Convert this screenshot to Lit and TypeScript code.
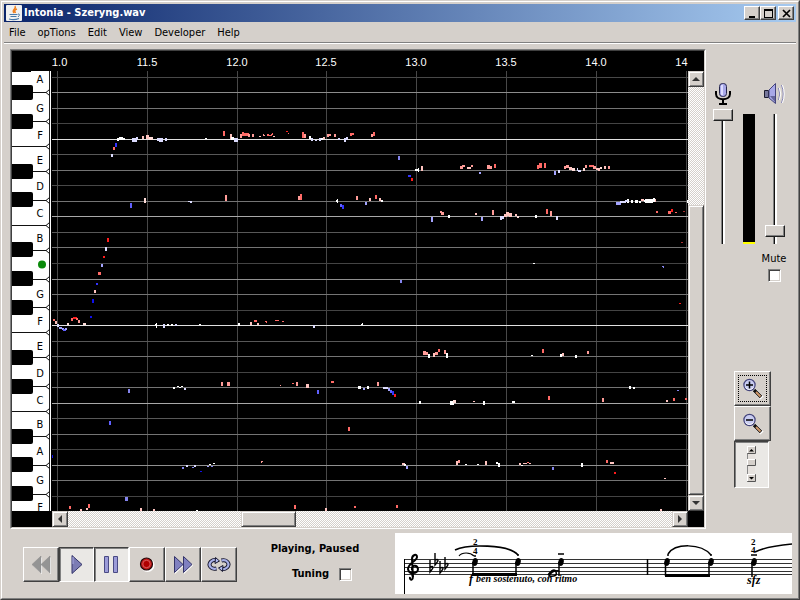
import { LitElement, html, svg, css } from "lit";
import { customElement, state } from "lit/decorators.js";

const TONES: Record<string, string> = {
  W: "#ffffff", P: "#ffc4c0", p: "#ffdcd8", S: "#ff9c98", R: "#ff6a66", X: "#ff1c1c",
  L: "#dcdcff", l: "#a4a4ff", m: "#8484ee", M: "#6060ff", B: "#3434ff", D: "#1010ee", K: "#a83030",
};

/* Detected pitches: x, y, width, height, tone. */
const NOTES = `
117 138 2 3 W;119 137 4 3 W;123 138 2 2 W;132 138 5 4 L;136 137 2 3 L;142 136 2 3 P;146 135 3 4 P;149 137 4 3 p;
157 138 2 3 L;159 138 4 4 L;165 138 2 3 L;113 147 2 3 R;115 143 2 4 B;111 154 2 3 L;144 198 2 5 p;130 203 2 5 M;
188 201 4 1 L;190 202 2 1 L;107 238 2 4 X;105 247 2 4 L;103 256 2 2 X;101 264 2 3 l;98 272 3 3 R;96 283 2 2 B;
94 290 2 3 P;92 299 2 4 D;90 316 2 2 D;53 319 2 2 R;55 321 2 3 P;57 324 2 3 L;59 327 3 2 l;62 328 2 2 l;63 329 3 2 M;
65 328 2 2 l;67 323 2 2 p;71 318 2 3 R;73 317 4 2 X;76 318 2 2 R;78 320 2 3 S;83 323 3 2 p;155 324 2 2 W;156 323 1 5 W;
163 324 2 4 L;167 324 2 2 W;171 324 2 2 W;175 324 2 2 L;199 324 2 1 W;128 389 2 4 m;173 387 2 2 W;177 386 2 1 W;
179 387 2 1 W;181 386 2 1 W;184 388 2 2 L;109 421 2 4 M;52 455 1 3 D;182 467 2 2 m;186 465 2 2 L;192 467 2 1 m;
194 465 2 2 L;125 497 3 4 m;69 506 2 3 R;80 509 2 2 P;86 508 2 2 P;88 504 2 4 R;140 508 2 3 P;153 509 2 2 P;
190 201 2 2 L;205 138 2 1 W;223 131 2 5 R;230 134 2 5 P;231 137 3 3 W;234 138 4 4 L;240 134 2 4 S;242 132 2 4 R;
244 133 5 3 R;248 134 2 3 S;252 134 2 3 S;259 136 2 1 P;263 134 1 2 S;264 135 1 1 S;267 134 2 2 R;269 135 3 1 R;
271 134 2 1 R;272 133 1 2 R;273 136 2 1 P;286 131 2 1 X;288 133 1 1 R;302 132 2 6 R;304 134 2 4 S;309 136 2 3 W;
311 138 2 3 L;315 140 2 1 L;319 138 2 3 L;321 138 2 2 W;323 137 2 2 P;327 134 2 3 S;329 134 2 2 S;334 134 2 3 S;
338 138 2 2 L;344 138 2 4 L;346 137 2 3 L;350 133 2 3 R;352 133 2 2 R;371 134 2 3 S;373 132 2 4 R;398 156 2 4 m;
408 175 3 2 B;411 178 2 3 X;415 169 3 2 W;418 168 1 4 W;421 166 2 5 P;225 195 2 6 S;298 196 2 4 S;300 194 2 6 R;
336 200 1 2 W;337 199 1 4 W;340 204 2 3 M;342 205 2 4 B;356 196 2 4 S;365 202 2 3 l;369 198 2 3 P;375 195 2 4 R;
379 198 2 3 P;381 200 2 2 W;400 280 2 3 m;460 166 3 3 S;462 165 3 2 S;467 167 4 2 P;471 165 2 2 S;479 172 2 2 l;
487 165 3 4 S;490 166 2 3 S;494 164 2 4 R;537 165 2 4 R;539 163 3 5 R;544 163 2 5 R;554 171 2 4 l;558 170 2 3 L;
564 166 2 3 S;566 165 3 3 S;569 167 3 3 P;572 168 3 3 p;577 168 1 3 L;578 170 3 2 L;583 168 2 3 p;585 165 2 3 S;
589 165 5 2 R;593 166 3 3 S;596 168 2 2 P;598 168 2 3 P;600 167 2 2 p;604 166 2 3 P;608 166 2 3 S;616 202 5 3 l;
620 201 4 2 L;624 201 2 2 L;627 199 2 4 W;625 200 3 2 L;631 200 2 3 W;635 200 3 3 W;639 201 2 2 W;641 199 3 2 P;
644 200 3 2 W;645 199 8 4 W;653 198 2 4 W;655 199 1 3 P;656 211 2 2 R;668 211 3 3 R;671 209 2 3 X;675 212 2 1 R;
683 211 2 1 K;687 200 1 3 W;440 211 2 2 S;441 212 3 3 S;448 215 2 3 W;431 217 2 5 l;475 213 2 2 P;481 217 2 4 l;
492 210 2 5 S;500 216 2 4 L;502 216 2 3 L;504 214 3 3 P;506 212 3 4 P;509 213 3 4 P;515 214 2 2 P;517 216 2 2 p;
535 215 2 3 W;546 209 2 5 R;550 211 2 5 S;556 216 2 4 L;681 242 2 1 K;662 266 2 1 m;663 267 1 1 m;533 263 2 1 W;
679 303 2 1 X;238 323 2 3 W;250 322 2 3 P;254 320 3 2 R;257 323 2 2 P;265 321 2 1 R;266 322 1 1 R;275 320 4 1 R;
282 321 2 1 R;313 325 2 3 L;361 324 2 1 W;362 323 1 2 W;423 351 3 4 S;426 352 2 3 S;428 354 2 4 W;433 353 2 4 P;
435 352 3 3 S;438 349 2 3 R;444 350 2 4 S;446 353 2 5 W;531 355 2 1 W;542 349 2 4 R;560 354 2 3 W;562 353 2 3 P;
575 355 2 3 W;587 351 2 3 S;221 382 2 4 S;227 382 3 4 S;280 385 1 1 S;292 383 2 1 R;296 382 2 4 S;306 384 3 4 P;
317 390 2 4 M;331 381 3 2 R;358 386 3 3 W;363 388 2 2 l;367 386 2 3 W;377 382 2 4 S;383 387 5 2 L;388 388 2 3 l;
390 390 2 3 M;392 391 2 4 B;394 394 2 3 X;419 401 2 3 W;450 401 4 4 W;453 400 3 3 p;473 401 2 1 P;483 401 2 4 W;
512 401 3 2 W;548 396 2 4 R;602 398 2 4 S;629 386 2 3 W;633 387 2 2 W;677 390 2 1 m;666 400 2 2 P;673 398 2 3 R;
685 398 2 2 R;348 427 2 4 R;200 471 2 1 D;207 466 2 1 l;209 464 2 1 W;211 466 2 1 m;213 463 2 1 W;261 461 2 1 S;
261 462 1 1 S;402 463 3 2 P;404 464 2 2 W;406 466 2 3 l;456 461 2 4 P;458 460 2 3 S;465 464 2 1 W;477 464 2 1 W;
485 461 2 4 P;496 462 2 2 W;498 463 2 4 W;519 463 2 2 P;521 465 2 1 W;523 463 4 1 P;527 462 2 1 R;529 463 2 1 P;
552 467 2 3 m;581 463 2 4 W;606 460 2 3 R;610 462 2 2 P;612 462 2 2 P;614 472 2 2 X;664 478 2 1 P;196 510 2 1 W;
294 505 2 4 R;325 508 2 3 P;354 506 2 2 R;396 505 2 3 R;660 509 2 2 P`
  .trim().split(";").map((n) => n.trim().split(" "));

/* Semitone lines, from the top; brightness repeats every octave. */
const LINE_TONES = ["#484848", "#8c8c8c", "#747474", "#444444", "#e0e0e0", "#585858", "#747474", "#484848", "#747474", "#a8a8a8", "#585858", "#747474", "#444444", "#909090", "#747474", "#444444", "#e0e0e0", "#585858", "#747474", "#444444", "#747474", "#a8a8a8", "#585858", "#747474", "#444444", "#909090", "#747474", "#444444"];
const LINES = LINE_TONES.map((tone, i) => ({ tone, y: 6 + Math.floor(i * 15.52 + 0.25) }));

const TICKS = [5, 95, 185, 274, 364, 454, 544, 634].map((x, i) => ({ x, label: (11 + i / 2).toFixed(1) }));

const WHITE_EDGES = [21, 50, 75, 100, 129, 154, 179, 208, 236, 261, 286, 315, 340, 365, 394, 423];
const BLACK_KEYS = [14, 43, 93, 121, 171, 200, 229, 279, 308, 358, 386, 415];
const KEY_NAMES: [string, number][] = [["A", 12], ["G", 41], ["F", 68], ["E", 93], ["D", 119], ["C", 146], ["B", 171], ["G", 227], ["F", 254], ["E", 279], ["D", 306], ["C", 333], ["B", 357], ["A", 384], ["G", 413], ["F", 440]];

const rect = (x: number, y: number, w: number | string, h: number | string, fill: string) =>
  svg`<rect x=${x} y=${y} width=${w} height=${h} fill=${fill} />`;

const magnifier = (plus: boolean) => html`
  <svg width="22" height="22" viewBox="0 0 22 22">
    <path d="M12 12 L20 20" stroke="#fff" stroke-width="4.500" />
    <path d="M12 12 L19 19" stroke="#111" stroke-width="3.600" />
    <path d="M14 14 L18.500 18.500" stroke="#d29a6c" stroke-width="2" />
    <circle cx="7.500" cy="7" r="5.600" fill="#c9cdf2" stroke="#44447c" stroke-width="1.200" />
    <path d="M3.500 9.500 a5 5 0 0 0 8 0" fill="none" stroke="#fff" />
    <path d=${plus ? "M4 7 h7 M7.500 3.500 v7" : "M4 7 h7"} stroke="#000" stroke-width="1.500" />
  </svg>`;

const ICONS = {
  rewind: html`<svg width="24" height="24"><path d="M13 4 V21 L4 12.500z M22 4 V21 L13 12.500z" fill="#fff" /><path d="M12 3 V20 L3 11.500z M21 3 V20 L12 11.500z" fill="#949494" stroke="#8a8a8a" stroke-width="0.500" /></svg>`,
  play: html`<svg width="24" height="24"><path d="M7 2.500 V20.500 L17 11.500z" fill="#7c7cb4" stroke="#333368" stroke-width="1" /><path d="M8 4 V11" stroke="#a8a8e0" stroke-width="1" /></svg>`,
  pause: html`<svg width="24" height="24"><path d="M4.500 3.500 h4 v16 h-4z M13.500 3.500 h4 v16 h-4z" fill="#9c9cd8" stroke="#4a4a84" /></svg>`,
  record: html`<svg width="24" height="24"><circle cx="12.500" cy="12" r="7" fill="#fff" /><circle cx="11.500" cy="11" r="6" fill="#c01818" stroke="#240808" stroke-width="1.200" /><circle cx="11.500" cy="11" r="3.700" fill="#b00000" stroke="#e07070" stroke-width="0.800" /></svg>`,
  forward: html`<svg width="24" height="24"><path d="M4 4 V21 L13 12.500z M13 4 V21 L22 12.500z" fill="#fff" /><path d="M3.500 3.500 V19.500 L12 11.500z M12.500 3.500 V19.500 L21 11.500z" fill="#8080c0" stroke="#333368" /></svg>`,
  loop: html`<svg width="24" height="24"><g fill="none"><path d="M9.500 15.500 C4 17 0.500 12 4 8.500 C6 6.800 8 6.800 9 7.300 M14.500 7.500 C20 6 23.500 11 20 14.500 C18 16.200 16 16.200 15 15.700" stroke="#15152c" stroke-width="4" /><path d="M9.500 15.500 C4 17 0.500 12 4 8.500 C6 6.800 8 6.800 9 7.300 M14.500 7.500 C20 6 23.500 11 20 14.500 C18 16.200 16 16.200 15 15.700" stroke="#a8b0e8" stroke-width="2.200" /></g><path d="M8.500 4.500 L12.500 8 L8 10.500z M15.500 18.500 L11.500 15 L16 12.500z" fill="#b4bcf0" stroke="#15152c" /></svg>`,
  mic: html`<svg width="18" height="24"><rect x="5.500" y="1.500" width="7" height="13" rx="3" fill="#a8a8e8" stroke="#26264c" /><path d="M8 3 v10" stroke="#dcdcff" stroke-width="2" /><path d="M2 9 V12 C2 19 16 19 16 12 V9" fill="none" stroke="#000" stroke-width="2" /><path d="M9 17 V21 M5 22 H13" stroke="#000" stroke-width="2" /></svg>`,
  speaker: html`<svg width="24" height="24"><path d="M1.500 8.500 h4 v7 h-4z" fill="#78789c" stroke="#1c1c30" /><path d="M6 8 L12.500 1.500 V21.500 L6 16z" fill="#a8a8e8" stroke="#44447c" /><path d="M7 14 L12 14 V20z" fill="#66669c" /><path d="M15.500 6 Q18 12 15.500 18 M18.500 3 Q22 12 18.500 21" fill="none" stroke="#8484b8" /><path d="M16.500 6 Q19 12 16.500 18 M19.500 3 Q23 12 19.500 21" fill="none" stroke="#fff" /></svg>`,
  bars: html`<svg width="10" height="38">
    <rect width="8" height="36" fill="#e6e2de" />
    <g fill="#d5d0cb" stroke="#555"><path d="M0.500 0.500 h8 v7 h-8z M0.500 13.500 h8 v6 h-8z M0.500 28.500 h8 v7 h-8z" /></g>
    <path d="M0 0.500 h8 M0 13.500 h8 M0 28.500 h8 M0.500 0 v7 M0.500 14 v5 M0.500 29 v6" stroke="#fff" />
    <path d="M0.500 8 v5 M0.500 20 v8" stroke="#888" />
    <path d="M2 5.500 h5 L4.500 3z M2 31 h5 L4.500 33.500z" fill="#000" /></svg>`,
  java: html`<svg width="16" height="16"><rect width="16" height="16" rx="1" fill="#f0f0f0" /><path d="M9 1 C11 4 5 5 8 8 M11 4 C8 5 8.500 6 9.500 8" fill="none" stroke="#f08020" stroke-width="1.500" /><path d="M3.500 9.500 H11.500 M4.500 11.500 H10.500 M3 14 Q8 15.500 13 13.500" fill="none" stroke="#4878a8" stroke-width="1.200" /><path d="M12 9 q3 0 0 3" fill="none" stroke="#4878a8" /></svg>`,
};

@customElement("music-score")
class MusicScore extends LitElement {
  static styles = css`
    :host { display: block; background: #fff; height: 61px; overflow: hidden; }
    svg { display: block; width: 100%; height: 61px; }
    .dynamics { font: italic bold 12px "Liberation Serif", serif; }
    .phrase { font: italic bold 10px "Liberation Serif", serif; }
    .finger { font: bold 9px "Liberation Serif", serif; }
  `;
  render() {
    const head = (x: number) => svg`<ellipse cx=${x} cy="29" rx="2.700" ry="4" transform=${`rotate(15 ${x} 29)`} />`;
    const flat = (x: number, y: number) => svg`<path d=${`M${x} ${y - 9} V${y + 3} Q${x + 6} ${y - 4} ${x} ${y - 2}`} fill="none" stroke="#000" stroke-width="1.400" />`;
    return html`<svg role="img" aria-label="Score">
      ${[26, 30, 34, 38, 41].map((y) => rect(9, y, "100%", 1, "#333"))}
      <rect x="9" y="26" width="1" height="35" />
      <g fill="none" stroke="#000">
        <path d="M17 41 C20 48 14 48 15 44 M18 44 L17 26 C17 22 22 20 22 24 C22 28 13 30 13 36 C14 42 23 41 23 36 C22 31 16 32 17 37" stroke-width="2" />
        <path d="M60 17 C72 11 114 11 123 22" stroke-width="1.600" />
        <path d="M64 23 C67 19 75 19 79 23" stroke-width="1.200" />
        <path d="M273 21 C280 10 306 10 316 22" stroke-width="1.500" />
        <path d="M360 19 C370 14 386 12 397 11" stroke-width="1.500" />
      </g>
      ${flat(35, 36)}${flat(40, 29)}${flat(45, 37)}${flat(50, 33)}
      ${[80, 123, 166, 272, 316, 359].map(head)}
      <path d="M78 29 V42 M121 29 V42 M164 29 V43 M252.500 26 V42 M270.500 29 V43 M314 29 V43 M357 29 V44" stroke="#000" stroke-width="1.500" />
      <rect x="77" y="40" width="45" height="3" />
      <rect x="270" y="41" width="45" height="3" />
      <path d="M163 21 h6 M356 22 h6" stroke="#000" stroke-width="1.500" />
      <circle cx="80" cy="23" r="1" /><circle cx="123" cy="22" r="1" /><circle cx="273" cy="22" r="1" /><circle cx="316" cy="22" r="1" />
      <path d="M153 42 q6 -8 8 -3 t-7 4 q3 -6 10 -5" fill="none" stroke="#000" stroke-width="1.500" />
      <text class="finger" x="78" y="12">2</text>
      <text class="finger" x="78" y="21">4</text>
      <text class="finger" x="356" y="12">2</text>
      <text class="finger" x="356" y="20">4</text>
      <text class="dynamics" x="74" y="50">f</text>
      <text class="phrase" x="81" y="49">ben sostenuto, con ritmo</text>
      <text class="dynamics" x="352" y="51">sfz</text>
    </svg>`;
  }
}

@customElement("pitch-view")
class PitchView extends LitElement {
  static styles = css`
    :host {
      display: grid; grid-template: 20px minmax(0, 1fr) 16px / 40px minmax(0, 1fr) 16px;
      background: #000; border: 1px solid; min-width: 0; min-height: 0;
    }
    .times { grid-column: 2; width: 100%; height: 100%; overflow: hidden; }
    .times text { font: 11px "Liberation Sans", sans-serif; fill: #fff; text-anchor: middle; }
    .keys { grid-area: 2 / 1; width: 39px; height: 100%; overflow: hidden; display: block; }
    .keys text { font: 11px "DejaVu Sans Condensed", "DejaVu Sans", sans-serif; text-anchor: middle; }
    .plot { grid-area: 2 / 2; width: 100%; height: 100%; overflow: hidden; display: block; shape-rendering: crispEdges; }
    .bar { display: flex; background: repeating-conic-gradient(#fff 0 25%, #d5d0cb 0 50%) 0 0 / 2px 2px; }
    .vertical { grid-area: 2 / 3; flex-direction: column; }
    .horizontal { grid-area: 3 / 2; }
    .raised {
      box-sizing: border-box; flex: none; background: #d5d0cb; border: 1px solid; padding: 0;
      border-color: #d5d0cb #404040 #404040 #d5d0cb; box-shadow: inset 1px 1px #fff, inset -1px -1px #808080;
      display: grid; place-items: center;
    }
    .arrow { width: 16px; height: 16px; }
    .before-v { flex: 119 1 0; }
    .thumb-v { flex: 289 1 0; }
    .before-h { flex: 173 1 0; }
    .thumb-h { flex: 53 1 0; }
    .after-h { flex: 376 1 0; }
  `;
  render() {
    const arrow = (d: string, label: string) => html`<button class="raised arrow" aria-label=${label}><svg width="8" height="8"><path d=${d} fill="#333" /></svg></button>`;
    return html`
      <svg class="times">${TICKS.map((t) => svg`<text x=${t.x} y="15">${t.label}</text>`)}</svg>
      <svg class="keys">
        <rect width="39" height="100%" fill="#fff" />
        <rect x="37" width="1" height="100%" fill="#222" />
        ${WHITE_EDGES.map((y) => svg`<path d=${`M0 ${y + 0.5} H34 L37.5 ${y - 2.5} M34 ${y + 0.5} L37.5 ${y + 3.5}`} fill="none" stroke="#111" />`)}
        <rect width="19" height="1" />
        ${BLACK_KEYS.map((y) => svg`<rect x="-4" y=${y} width="25" height="15" rx="2" />`)}
        ${KEY_NAMES.map(([name, y]) => svg`<text x="28" y=${y}>${name}</text>`)}
        <circle cx="30" cy="193.500" r="4" fill="#0a8a0a" />
      </svg>
      <svg class="plot" role="img" aria-label="Pitch over time">
        ${TICKS.map((t) => rect(t.x, 0, 1, "100%", "#484848"))}
        ${LINES.map((l) => rect(0, l.y, "100%", 1, l.tone))}
        <g transform="translate(-52 -71)">
          ${NOTES.map(([x, y, w, h, tone]) => rect(+x, +y, w, h, TONES[tone]))}
        </g>
      </svg>
      <div class="bar vertical">
        ${arrow("M0 6 H8 L4 2z", "Scroll up")}<span class="before-v"></span><div class="raised thumb-v"></div>${arrow("M0 2 H8 L4 6z", "Scroll down")}
      </div>
      <div class="bar horizontal">
        ${arrow("M6 0 V8 L2 4z", "Scroll left")}<span class="before-h"></span><div class="raised thumb-h"></div><span class="after-h"></span>${arrow("M2 0 V8 L6 4z", "Scroll right")}
      </div>`;
  }
}

@customElement("app-root")
class AppRoot extends LitElement {
  @state() private playing = true;
  @state() private paused = true;

  static styles = css`
    :host {
      display: block; box-sizing: border-box; height: 100vh; min-height: 560px; color: #000; background: #d5d0cb;
      border: 1px solid; border-color: #d5d0cb #404040 #404040 #d5d0cb;
      font: 11px/14px "DejaVu Sans Condensed", "DejaVu Sans", sans-serif;
    }
    svg { display: block; }
    .window {
      box-sizing: border-box; height: 100%; padding: 2px; border: 1px solid; border-color: #fff #808080 #808080 #fff;
      display: flex; flex-direction: column;
    }
    .title {
      height: 18px; flex: none; display: flex; align-items: center; padding: 0 2px; color: #fff;
      background: linear-gradient(90deg, #0a246a, #a6caf0);
    }
    h1 { font: bold 11px/18px "DejaVu Sans Condensed", "DejaVu Sans", sans-serif; margin: 0 auto 0 2px; }
    button { font: inherit; color: inherit; padding: 0; }
    .caption {
      width: 16px; height: 14px; background: #d5d0cb; border: 1px solid; border-color: #fff #404040 #404040 #fff;
      box-shadow: inset -1px -1px #808080; display: grid; place-items: center;
    }
    .close { margin-left: 2px; }
    .menu { height: 20px; flex: none; display: flex; padding: 0 1px; border-bottom: 1px solid #808080; box-shadow: 0 1px #fff; }
    .menu button { background: none; border: 0; margin: 0 8px 0 4px; line-height: 22px; }
    .work { flex: 1; min-height: 0; display: grid; grid-template-columns: minmax(0, 1fr) 90px; padding: 6px 0 0 6px; }
    .sunken { display: grid; min-width: 0; min-height: 0; border: 1px solid; border-color: #808080 #fff #fff #808080; }
    pitch-view { border-color: #404040 #d5d0cb #d5d0cb #404040; }
    .side { padding-top: 33px; }
    .mixer { display: grid; grid-template: 24px 140px / 34px 15px 40px; row-gap: 3px; place-items: center; }
    .volume { grid-column: 3; }
    .meter { width: 12px; height: 130px; background: linear-gradient(#000 128px, #ff0 128px); justify-self: end; }
    input[type="range"] {
      appearance: none; writing-mode: vertical-lr; direction: rtl; width: 20px; height: 140px; margin: 0;
      background: linear-gradient(90deg, #808080 1px, #111 1px 2px, #fff 2px) 8px 5px / 4px 130px no-repeat;
    }
    input[type="range"]::-webkit-slider-thumb {
      appearance: none; box-sizing: border-box; width: 20px; height: 12px; background: #d5d0cb;
      border: 1px solid; border-color: #fff #202020 #202020 #fff; box-shadow: inset -1px -1px #808080;
    }
    input[type="checkbox"] {
      appearance: none; box-sizing: border-box; width: 13px; height: 13px; margin: 0; background: #fff;
      border: 1px solid; border-color: #808080 #fff #fff #808080; box-shadow: inset 1px 1px #404040, inset -1px -1px #d5d0cb;
    }
    .mute { display: flex; flex-direction: column; align-items: center; gap: 3px; width: 40px; margin: 3px 0 0 48px; }
    .tools { display: flex; flex-direction: column; width: 37px; margin: 89px 0 0 28px; }
    .tool {
      box-sizing: border-box; height: 35px; background: #d5d0cb; display: grid; place-items: center; border: 1px solid;
      border-color: #fff #404040 #404040 #fff; box-shadow: inset -1px -1px #808080;
    }
    .tool.on { background: #eae8e5; border-color: #404040 #fff #fff #404040; box-shadow: inset 1px 1px #808080; }
    .focused { outline: 1px dotted #000; outline-offset: -5px; }
    .tall { height: 47px; width: 35px; }
    .foot { flex: none; display: grid; grid-template-columns: auto 1fr 397px; padding: 4px 4px 2px 19px; }
    .transport { display: flex; padding-top: 14px; }
    .transport .tool { width: 36px; }
    .transport .on { width: 35px; }
    .status { display: flex; flex-direction: column; align-items: center; font-weight: bold; padding: 9px 2px 0 0; gap: 11px; }
    .status p { margin: 0; }
    .tuning { display: flex; align-items: center; gap: 10px; margin-left: 14px; }
  `;

  render() {
    const tool = (label: string, icon: unknown, on = false, click = () => {}) =>
      html`<button class="tool ${on ? "on" : ""}" aria-label=${label} @click=${click}>${icon}</button>`;
    return html`<div class="window">
      <header class="title">
        ${ICONS.java}
        <h1>Intonia - Szeryng.wav</h1>
        <button class="caption" aria-label="Minimize"><svg width="9" height="9"><rect x="1" y="7" width="6" height="2" /></svg></button>
        <button class="caption" aria-label="Maximize"><svg width="9" height="9"><path d="M0 0 h9 v9 h-9z M1 2 v6 h7 v-6z" fill-rule="evenodd" /></svg></button>
        <button class="caption close" aria-label="Close"><svg width="9" height="9"><path d="M1 1 L8 8 M8 1 L1 8" stroke="#000" stroke-width="1.700" /></svg></button>
      </header>
      <nav class="menu">${["File", "opTions", "Edit", "View", "Developer", "Help"].map((m) => html`<button>${m}</button>`)}</nav>
      <main class="work">
        <div class="sunken"><pitch-view></pitch-view></div>
        <aside class="side">
          <div class="mixer">
            ${ICONS.mic}<span class="volume">${ICONS.speaker}</span>
            <input type="range" aria-label="Microphone level" value="100" />
            <div class="meter"></div>
            <input type="range" aria-label="Volume" value="9" />
          </div>
          <label class="mute">Mute<input type="checkbox" /></label>
          <div class="tools">
            <button class="tool focused" aria-label="Zoom in">${magnifier(true)}</button>
            <button class="tool" aria-label="Zoom out">${magnifier(false)}</button>
            <button class="tool on tall" aria-label="Scroll bars">${ICONS.bars}</button>
          </div>
        </aside>
      </main>
      <footer class="foot">
        <div class="transport">
          ${tool("Rewind", ICONS.rewind)}
          ${tool("Play", ICONS.play, this.playing, () => (this.playing = !this.playing))}
          ${tool("Pause", ICONS.pause, this.paused, () => (this.paused = !this.paused))}
          ${tool("Record", ICONS.record)}
          ${tool("Fast forward", ICONS.forward)}
          ${tool("Loop", ICONS.loop)}
        </div>
        <div class="status">
          <p>Playing, Paused</p>
          <label class="tuning">Tuning<input type="checkbox" /></label>
        </div>
        <music-score></music-score>
      </footer>
    </div>`;
  }
}
